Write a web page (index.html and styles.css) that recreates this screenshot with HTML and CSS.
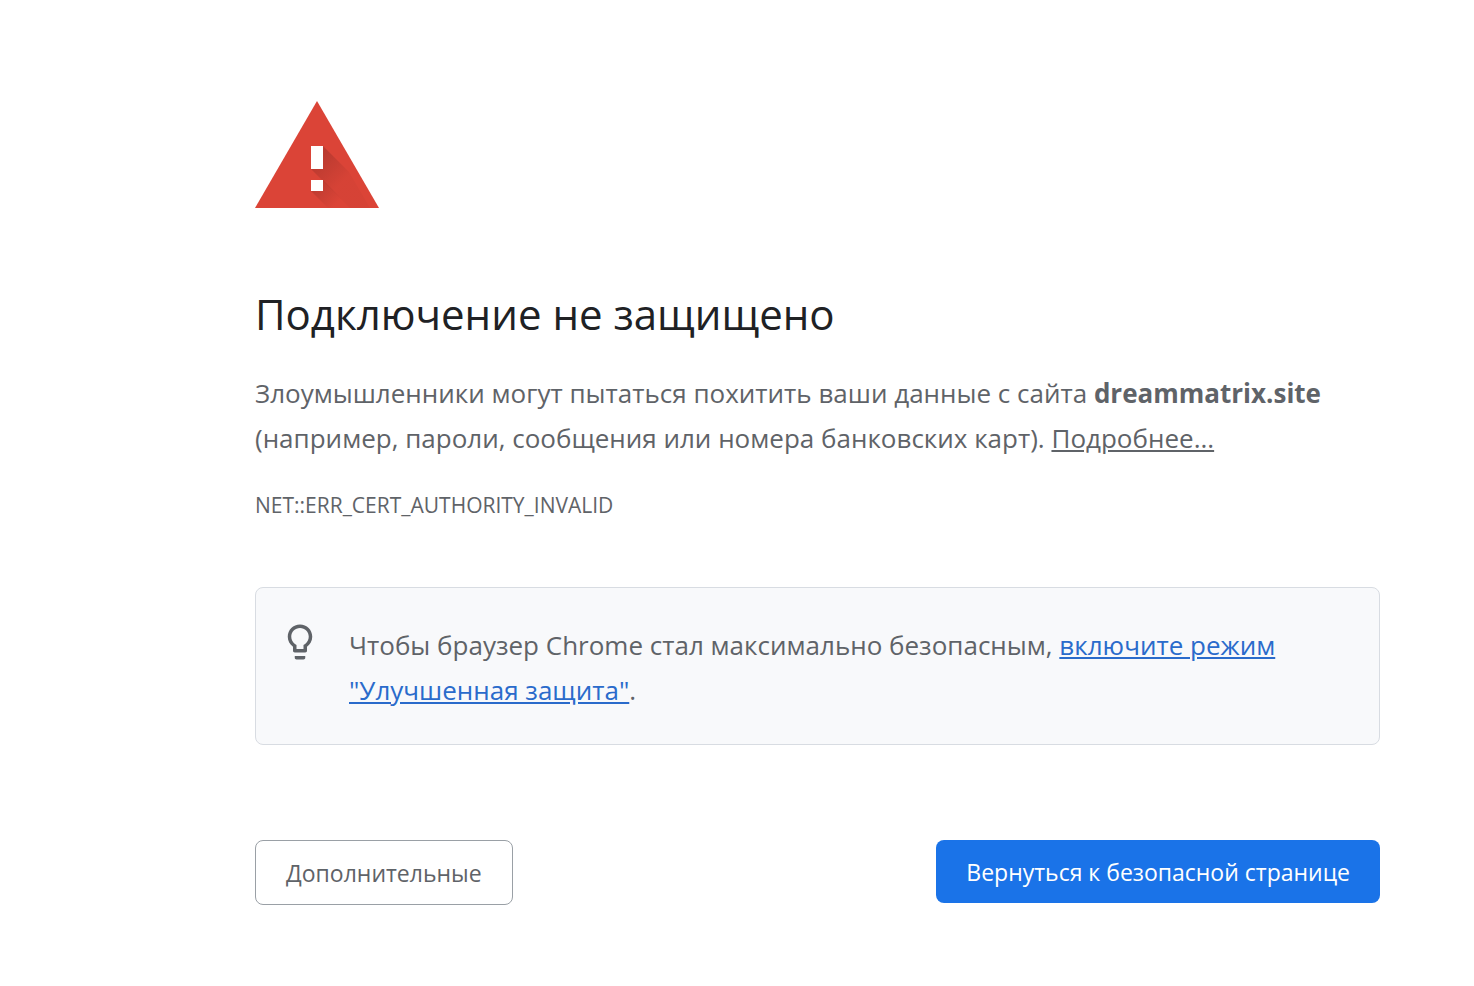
FILE: index.html
```html
<!DOCTYPE html>
<html lang="ru">
<head>
    <meta charset="UTF-8">
    <meta name="viewport" content="width=device-width, initial-scale=1.0">
    <title>Ошибка нарушения конфиденциальности</title>
    <link rel="stylesheet" href="styles.css">
</head>
<body>
    <main class="interstitial">
        <svg class="icon" viewBox="0 0 124 107" aria-hidden="true">
            <defs>
                <linearGradient id="shadow" gradientUnits="userSpaceOnUse" x1="60" y1="60" x2="84" y2="84">
                    <stop offset="0" stop-color="#a8352c" stop-opacity=".65"/>
                    <stop offset="1" stop-color="#a8352c" stop-opacity=".1"/>
                </linearGradient>
                <linearGradient id="shadow-dot" gradientUnits="userSpaceOnUse" x1="60" y1="84" x2="80" y2="104">
                    <stop offset="0" stop-color="#a8352c" stop-opacity=".6"/>
                    <stop offset="1" stop-color="#a8352c" stop-opacity="0"/>
                </linearGradient>
            </defs>
            <path d="M62 0L124 107H0z" fill="#db4437"/>
            <path d="M68 45L94 71L115 107H95L56 68z" fill="url(#shadow)"/>
            <path d="M68 79L96 107H73L56 90z" fill="url(#shadow-dot)"/>
            <path d="M56 45h12v23H56zM56 79h12v11H56z" fill="#fff"/>
        </svg>

        <h1>Подключение не защищено</h1>
        <p class="message">Злоумышленники могут пытаться похитить ваши данные с сайта <strong>dreammatrix.site</strong> (например, пароли, сообщения или номера банковских карт). <a href="#">Подробнее...</a></p>
        <div class="error-code">NET::ERR_CERT_AUTHORITY_INVALID</div>

        <div class="enhanced-protection">
            <svg class="bulb" viewBox="0 0 24 24" aria-hidden="true">
                <path d="M9 21c0 .5.4 1 1 1h4c.6 0 1-.5 1-1v-1H9v1zm3-19C8.100 2 5 5.100 5 9c0 2.400 1.200 4.500 3 5.700V17c0 .5.400 1 1 1h6c.6 0 1-.5 1-1v-2.300c1.800-1.300 3-3.400 3-5.700 0-3.900-3.100-7-7-7zm2.900 11.100l-.9.600V16h-4v-2.300l-.9-.6C7.800 12.200 7 10.600 7 9c0-2.800 2.200-5 5-5s5 2.200 5 5c0 1.600-.8 3.200-2.100 4.100z" fill="#5f6368"/>
            </svg>
            <p>Чтобы браузер Chrome стал максимально безопасным, <a href="#">включите режим "Улучшенная защита"</a>.</p>
        </div>

        <div class="nav-wrapper">
            <button type="button" class="secondary-button">Дополнительные</button>
            <button type="button" class="primary-button">Вернуться к безопасной странице</button>
        </div>
    </main>
</body>
</html>
```
FILE: styles.css
```css
body {
    margin: 0;
    background-color: #fff;
    color: #5f6368;
    font-family: "Segoe UI", "Open Sans", "Noto Sans", sans-serif;
    font-size: 26px;
    line-height: 45px;
}
.interstitial {
    margin: 101px 94px 80px 255px;
}
.icon {
    display: block;
    width: 124px;
    height: 107px;
    margin-bottom: 76px;
}
h1 {
    margin: 0 0 27px;
    color: #202124;
    font-size: 42px;
    font-weight: 400;
    line-height: 60px;
}
p {
    margin: 0;
}
.message a {
    color: inherit;
}
.error-code {
    margin-top: 28px;
    font-size: 21px;
    line-height: 32px;
}
.enhanced-protection {
    display: flex;
    gap: 28px;
    margin-top: 66px;
    padding: 33px 30px 31px 23px;
    border: 1px solid #d8dce2;
    border-radius: 8px;
    background-color: #f8f9fb;
}
.enhanced-protection p {
    margin-top: 2px;
}
.enhanced-protection a {
    color: #2a6bcb;
}
.bulb {
    flex: none;
    width: 42px;
    height: 42px;
}
.nav-wrapper {
    display: flex;
    align-items: flex-start;
    justify-content: space-between;
    margin-top: 95px;
}
button {
    padding: 17px 30px 15px;
    border-radius: 8px;
    font-family: inherit;
    font-size: 23px;
    line-height: 31px;
    cursor: pointer;
}
.secondary-button {
    border: 1px solid #9aa0a6;
    background-color: #fff;
    color: #5f6368;
}
.primary-button {
    border: none;
    background-color: #1a73e8;
    color: #fff;
}
```
